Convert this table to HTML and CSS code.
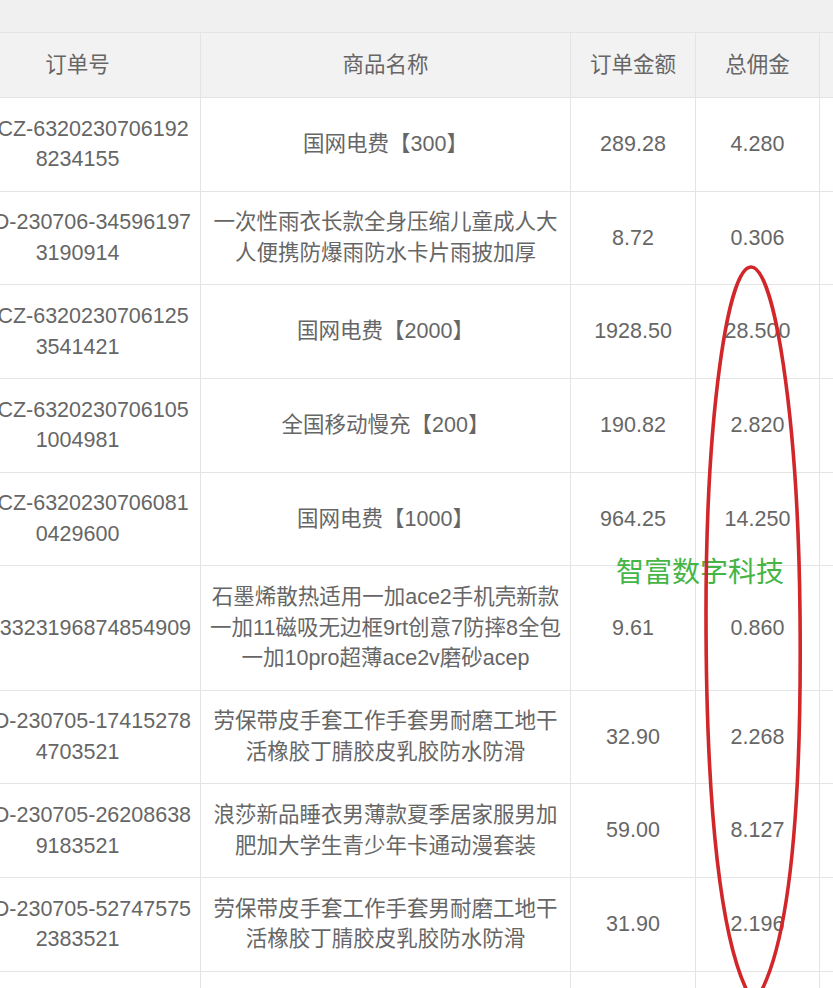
FILE: index.html
```html
<!DOCTYPE html>
<html lang="zh-CN">
<head>
    <meta charset="UTF-8">
    <meta name="viewport" content="width=device-width, initial-scale=1.0">
    <title>订单列表</title>
    <link rel="stylesheet" href="styles.css">
</head>
<body>

    <div class="page">
        <!-- Toolbar strip above the table -->
        <div class="toolbar"></div>

        <!-- Order table -->
        <table class="order-table">
            <colgroup>
                <col class="col-order">
                <col class="col-name">
                <col class="col-amount">
                <col class="col-fee">
                <col class="col-more">
            </colgroup>
            <thead>
                <tr>
                    <th>订单号</th>
                    <th>商品名称</th>
                    <th>订单金额</th>
                    <th>总佣金</th>
                    <th></th>
                </tr>
            </thead>
            <tbody>
                <tr>
                    <td>DHCZ-6320230706192<br>8234155</td>
                    <td>国网电费【300】</td>
                    <td>289.28</td>
                    <td>4.280</td>
                    <td></td>
                </tr>
                <tr>
                    <td>PDD-230706-34596197<br>3190914</td>
                    <td>一次性雨衣长款全身压缩儿童成人大<br>人便携防爆雨防水卡片雨披加厚</td>
                    <td>8.72</td>
                    <td>0.306</td>
                    <td></td>
                </tr>
                <tr>
                    <td>DHCZ-6320230706125<br>3541421</td>
                    <td>国网电费【2000】</td>
                    <td>1928.50</td>
                    <td>28.500</td>
                    <td></td>
                </tr>
                <tr>
                    <td>DHCZ-6320230706105<br>1004981</td>
                    <td>全国移动慢充【200】</td>
                    <td>190.82</td>
                    <td>2.820</td>
                    <td></td>
                </tr>
                <tr>
                    <td>DHCZ-6320230706081<br>0429600</td>
                    <td>国网电费【1000】</td>
                    <td>964.25</td>
                    <td>14.250</td>
                    <td></td>
                </tr>
                <tr>
                    <td>0713323196874854909</td>
                    <td>石墨烯散热适用一加ace2手机壳新款<br>一加11磁吸无边框9rt创意7防摔8全包<br>一加10pro超薄ace2v磨砂acep</td>
                    <td>9.61</td>
                    <td>0.860</td>
                    <td></td>
                </tr>
                <tr>
                    <td>PDD-230705-17415278<br>4703521</td>
                    <td>劳保带皮手套工作手套男耐磨工地干<br>活橡胶丁腈胶皮乳胶防水防滑</td>
                    <td>32.90</td>
                    <td>2.268</td>
                    <td></td>
                </tr>
                <tr>
                    <td>PDD-230705-26208638<br>9183521</td>
                    <td>浪莎新品睡衣男薄款夏季居家服男加<br>肥加大学生青少年卡通动漫套装</td>
                    <td>59.00</td>
                    <td>8.127</td>
                    <td></td>
                </tr>
                <tr>
                    <td>PDD-230705-52747575<br>2383521</td>
                    <td>劳保带皮手套工作手套男耐磨工地干<br>活橡胶丁腈胶皮乳胶防水防滑</td>
                    <td>31.90</td>
                    <td>2.196</td>
                    <td></td>
                </tr>
                <tr>
                    <td>PDD-230705-11853602<br>7715206</td>
                    <td>劳保带皮手套工作手套男耐磨工地干<br>活橡胶丁腈胶皮乳胶防水防滑</td>
                    <td>29.90</td>
                    <td>2.047</td>
                    <td></td>
                </tr>
            </tbody>
        </table>

        <!-- Watermark and hand-drawn mark over the commission column -->
        <div class="watermark">智富数字科技</div>
        <svg class="mark" width="120" height="760" viewBox="0 0 120 760">
            <path d="M57 4 C 80 4, 104 150, 106 350 C 108 540, 96 690, 60 740 C 26 690, 12 540, 12 350 C 12 150, 34 4, 57 4 Z"
                  fill="none" stroke="#d1262a" stroke-width="3.6"/>
        </svg>
    </div>

</body>
</html>
```

FILE: styles.css
```css
/* Page */
body {
    margin: 0;
    background-color: #f1f1f1;
    font-family: 'Liberation Sans', 'Noto Sans CJK SC', sans-serif;
    color: #666;
    overflow: hidden;
}

.page {
    position: relative;
    width: 833px;
    height: 988px;
    overflow: hidden;
}

.toolbar {
    height: 32px;
    background-color: #f0f0f0;
}

/* Table */
.order-table {
    margin-left: -46px;
    border-collapse: collapse;
    table-layout: fixed;
    width: 1005px;
    background-color: #fff;
    font-size: 21.5px;
    line-height: 30.6px;
}

.col-order { width: 246px; }
.col-name { width: 370px; }
.col-amount { width: 125px; }
.col-fee { width: 124px; }
.col-more { width: 140px; }

.order-table th,
.order-table td {
    border: 1px solid #e4e4e4;
    text-align: center;
    vertical-align: middle;
    white-space: nowrap;
    overflow: hidden;
}

.order-table th {
    background-color: #f2f2f2;
    font-weight: normal;
    padding: 16.7px 8px;
}

.order-table td {
    padding: 15.75px 8px;
}

/* Overlays */
.watermark {
    position: absolute;
    left: 616px;
    top: 555px;
    font-size: 28px;
    line-height: 36px;
    color: #45b545;
}

.mark {
    position: absolute;
    left: 694px;
    top: 263px;
}
```
